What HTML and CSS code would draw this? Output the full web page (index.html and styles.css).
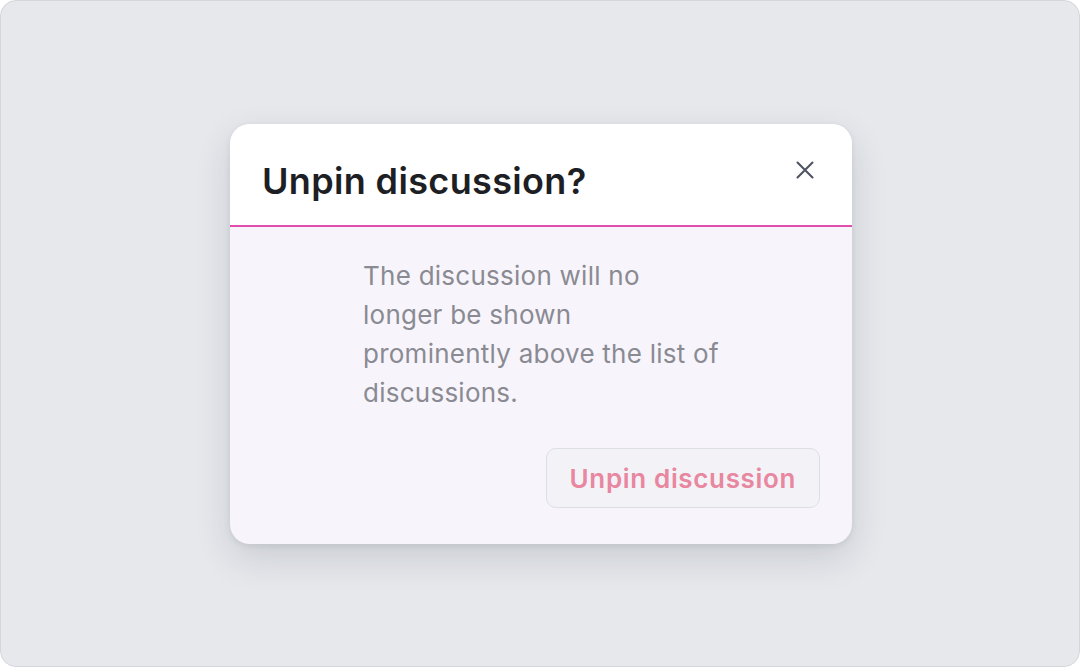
FILE: index.html
```html
<!DOCTYPE html>
<html lang="en">
<head>
    <meta charset="UTF-8">
    <meta name="viewport" content="width=device-width, initial-scale=1.0">
    <title>Unpin discussion</title>
    <link rel="stylesheet" href="styles.css">
</head>
<body>
    <div class="frame">
        <div class="dialog" role="dialog" aria-labelledby="dialogTitle">
            <div class="dialog-header">
                <h1 id="dialogTitle">Unpin discussion?</h1>
                <button class="close" aria-label="Close">
                    <svg viewBox="0 0 18 18" fill="none" stroke="currentColor" stroke-width="2.1" stroke-linecap="round">
                        <path d="M1.5 1.5 L16.5 16.5 M16.5 1.5 L1.5 16.5"/>
                    </svg>
                </button>
            </div>
            <div class="dialog-body">
                <div class="message">
                    <div class="spacer"></div>
                    <p>The discussion will no longer be shown prominently above the list of discussions.</p>
                </div>
                <div class="actions">
                    <button class="confirm">Unpin discussion</button>
                </div>
            </div>
        </div>
    </div>
</body>
</html>
```

FILE: styles.css
```css
body {
    margin: 0;
    background-color: #ffffff;
    font-family: Inter, "Noto Sans", Arial, sans-serif;
}
.frame {
    box-sizing: border-box;
    width: 1080px;
    height: 667px;
    border: 1px solid #d3d6db;
    border-radius: 16px;
    background-color: #e6e8ec;
    display: flex;
    justify-content: center;
    align-items: flex-start;
    padding-top: 123px;
    padding-left: 2px;
}
.dialog {
    width: 622px;
    border-radius: 20px;
    overflow: hidden;
    background-color: #f7f5fb;
    box-shadow: 0 14px 36px rgba(30, 35, 50, 0.14), 0 2px 6px rgba(30, 35, 50, 0.08);
}
.dialog-header {
    background-color: #ffffff;
    border-bottom: 2px solid #e14fae;
    padding: 35px 32px 22px 32px;
    display: flex;
    justify-content: space-between;
    align-items: flex-start;
}
h1 {
    margin: 0;
    font-size: 36px;
    line-height: 44px;
    font-weight: 600;
    color: #1e1f24;
    letter-spacing: 0.35px;
}
.close {
    background: none;
    border: none;
    padding: 0;
    margin: -1px 3px 0 0;
    color: #4e5460;
    cursor: pointer;
    width: 24px;
    height: 24px;
    display: flex;
    align-items: center;
    justify-content: center;
}
.close svg {
    width: 18px;
    height: 18px;
}
.dialog-body {
    padding: 29px 32px 36px 32px;
}
.message {
    display: flex;
}
.spacer {
    width: 101px;
    flex-shrink: 0;
}
.message p {
    margin: 0;
    width: 360px;
    font-size: 26px;
    line-height: 39px;
    letter-spacing: 0.25px;
    color: #8a8a93;
}
.actions {
    display: flex;
    justify-content: flex-end;
    margin-top: 36px;
}
.confirm {
    font-family: Inter, "Noto Sans", Arial, sans-serif;
    font-size: 26px;
    font-weight: 600;
    letter-spacing: 0.65px;
    color: #e8879f;
    background-color: #f3f2f7;
    border: 1px solid #dcdfe3;
    border-radius: 10px;
    padding: 0 23px;
    height: 60px;
    cursor: pointer;
}
```
